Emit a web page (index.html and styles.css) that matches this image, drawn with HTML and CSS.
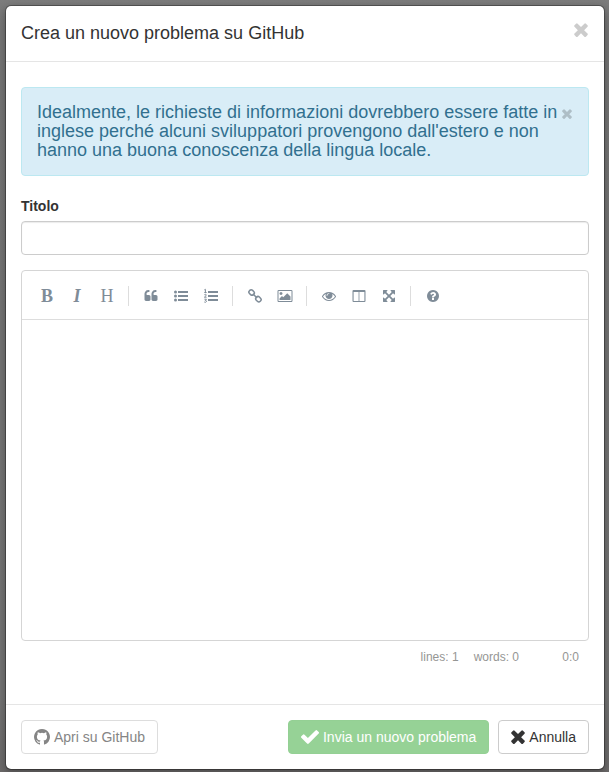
FILE: index.html
```
<!DOCTYPE html>
<html lang="it">
<head>
<meta charset="utf-8">
<meta name="viewport" content="width=device-width, initial-scale=1">
<title>Crea un nuovo problema su GitHub</title>
<link rel="stylesheet" href="styles.css">
</head>
<body>
<svg class="sprite" aria-hidden="true">
  <symbol id="times" viewBox="302 334 1188 1220"><path d="M1490 1322q0 40-28 68l-136 136q-28 28-68 28t-68-28l-294-294-294 294q-28 28-68 28t-68-28l-136-136q-28-28-28-68t28-68l294-294-294-294q-28-28-28-68t28-68l136-136q28-28 68-28t68 28l294 294 294-294q28-28 68-28t68 28l136 136q28 28 28 68t-28 68l-294 294 294 294q28 28 28 68z"/></symbol>
</svg>
<div class="modal" role="dialog" aria-labelledby="modal-title">
  <header class="modal-header">
    <h1 class="modal-title" id="modal-title">Crea un nuovo problema su GitHub</h1>
    <button class="close" type="button" aria-label="Chiudi"><svg class="close-icon"><use href="#times"/></svg></button>
  </header>
  <form class="modal-form">
    <div class="modal-body">
      <div class="alert" role="alert">
        <p class="alert-text">Idealmente, le richieste di informazioni dovrebbero essere fatte in inglese perché alcuni sviluppatori provengono dall'estero e non hanno una buona conoscenza della lingua locale.</p>
        <button class="close alert-close" type="button" aria-label="Chiudi avviso"><svg class="alert-close-icon"><use href="#times"/></svg></button>
      </div>
      <label class="label" for="title">Titolo</label>
      <input class="input" id="title" type="text">
      <div class="editor">
        <div class="toolbar" role="toolbar" aria-label="Formattazione">
          <button class="tool letter bold" type="button">B</button>
          <button class="tool letter italic" type="button">I</button>
          <button class="tool letter" type="button">H</button>
          <i class="separator"></i>
          <button class="tool" type="button" aria-label="Citazione"><svg class="icon" viewBox="0 0 1792 1792"><path d="M832 960v384q0 80-56 136t-136 56h-384q-80 0-136-56t-56-136v-704q0-104 40.5-198.5t109.5-163.5 163.5-109.5 198.5-40.5h64q26 0 45 19t19 45v128q0 26-19 45t-45 19h-64q-106 0-181 75t-75 181v32q0 40 28 68t68 28h224q80 0 136 56t56 136zm896 0v384q0 80-56 136t-136 56h-384q-80 0-136-56t-56-136v-704q0-104 40.5-198.5t109.5-163.5 163.5-109.5 198.5-40.5h64q26 0 45 19t19 45v128q0 26-19 45t-45 19h-64q-106 0-181 75t-75 181v32q0 40 28 68t68 28h224q80 0 136 56t56 136z"/></svg></button>
          <button class="tool" type="button" aria-label="Elenco puntato"><svg class="icon" viewBox="0 0 14 14"><circle cx="1.5" cy="3" r="1.5"/><circle cx="1.5" cy="7" r="1.5"/><circle cx="1.5" cy="11" r="1.5"/><path d="M4 2h10v2H4zM4 6h10v2H4zM4 10h10v2H4z"/></svg></button>
          <button class="tool" type="button" aria-label="Elenco numerato"><svg class="icon" viewBox="0 0 14 14"><path d="M4 2h10v2H4zM4 6h10v2H4zM4 10h10v2H4z"/><path class="thin" d="M.4.8l1-.5v3M.3 3.5h2.3M.4 5.7q1-.8 1.8 0 .4.8-1.8 2.500h2.200M.4 10.200h2l-1.100 1.300q1.300 0 1.200 1-.6 1.300-2.200.5"/></svg></button>
          <i class="separator"></i>
          <button class="tool" type="button" aria-label="Collegamento"><svg class="icon" viewBox="0 0 14 14"><g class="stroke"><rect x="-2.8" y="-2.2" width="5.6" height="4.4" rx="2" transform="translate(3.6 3.500) rotate(45)"/><rect x="-2.8" y="-2.2" width="5.6" height="4.4" rx="2" transform="translate(10.4 10.200) rotate(45)"/><path d="M4.800 4.800l4.400 4.200"/></g></svg></button>
          <button class="tool" type="button" aria-label="Immagine"><svg class="icon wide" viewBox="-64 0 1920 1792"><path d="M576 576q0 80-56 136t-136 56-136-56-56-136 56-136 136-56 136 56 56 136zm1024 384v448h-1408v-192l320-320 160 160 512-512zm96-704h-1600q-13 0-22.500 9.500t-9.500 22.500v1216q0 13 9.500 22.500t22.500 9.500h1600q13 0 22.500-9.500t9.500-22.500v-1216q0-13-9.500-22.500t-22.500-9.500zm160 32v1216q0 66-47 113t-113 47h-1600q-66 0-113-47t-47-113v-1216q0-66 47-113t113-47h1600q66 0 113 47t47 113z"/></svg></button>
          <i class="separator"></i>
          <button class="tool" type="button" aria-label="Anteprima"><svg class="icon" viewBox="0 0 1792 1792"><path d="M1664 960q-152-236-381-353 61 104 61 225 0 185-131.500 316.500t-316.500 131.500-316.500-131.500-131.500-316.500q0-121 61-225-229 117-381 353 133 205 333.500 326.500t434.500 121.500 434.500-121.500 333.500-326.500zm-720-384q0-20-14-34t-34-14q-125 0-214.500 89.500t-89.500 214.500q0 20 14 34t34 14 34-14 14-34q0-86 61-147t147-61q20 0 34-14t14-34zm848 384q0 34-20 69-140 230-376.500 368.500t-499.500 138.500-499.500-139-376.500-368q-20-35-20-69t20-69q140-229 376.500-368t499.500-139 499.500 139 376.500 368q20 35 20 69z"/></svg></button>
          <button class="tool" type="button" aria-label="Affianca"><svg class="icon" viewBox="0 0 14 14"><path fill-rule="evenodd" d="M1.500 1h11q1 0 1 1v10q0 1-1 1h-11q-1 0-1-1V2q0-1 1-1zM1.600 3v9h5V3zM7.400 3v9h5V3z"/></svg></button>
          <button class="tool" type="button" aria-label="Schermo intero"><svg class="icon" viewBox="0 0 1792 1792"><path d="M1411 541l-355 355 355 355 144-144q29-31 70-14 39 17 39 59v448q0 26-19 45t-45 19h-448q-42 0-59-40-17-39 14-69l144-144-355-355-355 355 144 144q31 30 14 69-17 40-59 40h-448q-26 0-45-19t-19-45v-448q0-42 40-59 39-17 69 14l144 144 355-355-355-355-144 144q-19 19-45 19-12 0-24-5-40-17-40-59v-448q0-26 19-45t45-19h448q42 0 59 40 17 39-14 69l-144 144 355 355 355-355-144-144q-31-30-14-69 17-40 59-40h448q26 0 45 19t19 45v448q0 42-39 59-13 5-25 5-26 0-45-19z"/></svg></button>
          <i class="separator"></i>
          <button class="tool" type="button" aria-label="Guida"><svg class="icon" viewBox="0 0 1792 1792"><path d="M1024 1376v-192q0-14-9-23t-23-9h-192q-14 0-23 9t-9 23v192q0 14 9 23t23 9h192q14 0 23-9t9-23zm256-672q0-88-55.500-163t-138.500-116-170-41q-243 0-371 213-15 24 8 42l132 100q7 6 19 6 16 0 25-12 53-68 86-92 34-24 86-24 48 0 85.500 26t37.500 59q0 38-20 61t-68 45q-63 28-115.500 86.500t-52.500 125.500v36q0 14 9 23t23 9h192q14 0 23-9t9-23q0-19 21.500-49.500t54.500-49.500q32-18 49-28.500t46-35 44.500-48 28-60.500 12.500-81zm384 192q0 209-103 385.500t-279.500 279.500-385.500 103-385.500-103-279.500-279.500-103-385.500 103-385.500 279.500-279.500 385.500-103 385.500 103 279.500 279.500 103 385.500z"/></svg></button>
        </div>
        <textarea class="editor-text" aria-label="Descrizione"></textarea>
      </div>
      <div class="status"><span>lines: 1</span><span>words: 0</span><span class="cursor">0:0</span></div>
    </div>
    <footer class="modal-footer">
      <button class="btn btn-open" type="button" disabled><svg class="btn-icon" viewBox="128 128 1536 1536"><path d="M896 128q209 0 385.500 103t279.500 279.500 103 385.500q0 251-146.500 451.500t-378.500 277.500q-27 5-40-7t-13-30q0-3 .5-76.500t.5-134.500q0-97-52-142 57-6 102.500-18t94-39 81-66.500 53-105 20.500-150.500q0-119-79-206 37-91-8-204-28-9-81 11t-92 44l-38 24q-93-26-192-26t-192 26q-16-11-42.500-27t-83.500-38.500-85-13.500q-45 113-8 204-79 87-79 206 0 85 20.500 150t52.500 105 80.500 67 94 39 102.500 18q-39 36-49 103-21 10-45 15t-57 5-65.500-21.500-55.500-62.500q-19-32-48.500-52t-49.500-24l-20-3q-21 0-29 4.500t-5 11.500 9 14 13 12l7 5q22 10 43.500 38t31.500 51l10 23q13 38 44 61.500t67 30 69.500 7 55.500-3.500l23-4q0 38 .5 88.500t.5 54.500q0 18-13 30t-40 7q-232-77-378.500-277.500t-146.500-451.500q0-209 103-385.500t279.500-279.500 385.500-103z"/></svg>Apri su GitHub</button>
      <button class="btn btn-submit" type="submit" disabled><svg class="btn-icon check" viewBox="121 334 1550 1188"><path d="M1671 566q0 40-28 68l-724 724-136 136q-28 28-68 28t-68-28l-136-136-362-362q-28-28-28-68t28-68l136-136q28-28 68-28t68 28l294 295 656-657q28-28 68-28t68 28l136 136q28 28 28 68z"/></svg>Invia un nuovo problema</button>
      <button class="btn" type="button"><svg class="btn-icon cancel"><use href="#times"/></svg>Annulla</button>
    </footer>
  </form>
</div>
</body>
</html>
```
FILE: styles.css
```
* { box-sizing: border-box; }

body {
  margin: 0;
  padding: 5px 4px 2px 5px;
  min-height: 100vh;
  display: flex;
  background: linear-gradient(#7c7c7c, #767676 30px, #747474 90%, #6c6a6a);
  color: #333;
  font: 14px/20px "Liberation Sans", Arial, sans-serif;
}

button, input, textarea { font: inherit; color: inherit; }
svg { display: block; fill: currentColor; }
.sprite { position: absolute; width: 0; height: 0; }

.modal {
  flex: 1;
  display: flex;
  flex-direction: column;
  background: #fff;
  background-clip: padding-box;
  border: 1px solid rgba(0, 0, 0, .3);
  border-radius: 6px;
  box-shadow: 0 3px 9px rgba(0, 0, 0, .3);
}

.modal-header {
  display: flex;
  justify-content: space-between;
  padding: 15px;
  border-bottom: 1px solid #e5e5e5;
}

.modal-title { margin: 0; font-size: 18px; line-height: 25px; font-weight: 400; }

.close { display: flex; align-self: flex-start; padding: 2px 1px; border: 0; background: none; color: #ccc; }
.close-icon { width: 14px; height: 14px; }

.modal-form { flex: 1; display: flex; flex-direction: column; }
.modal-body { flex: 1; display: flex; flex-direction: column; padding: 25px 15px; }

.alert {
  display: flex;
  margin-bottom: 20px;
  padding: 15px;
  border: 1px solid #bce8f1;
  border-radius: 4px;
  background: #d9edf7;
  color: #31708f;
}

.alert-text { flex: 1; margin: 0; font-size: 18px; line-height: 19px; }
.alert-close { padding: 6px 1px 6px 0; color: #aebec6; }
.alert-close-icon { width: 10px; height: 10px; }

.label { margin-bottom: 5px; font-weight: 700; }

.input {
  width: 100%;
  height: 34px;
  margin-bottom: 15px;
  padding: 6px 12px;
  border: 1px solid #ccc;
  border-radius: 4px;
  box-shadow: inset 0 1px 1px rgba(0, 0, 0, .08);
}

.editor { flex: 1; display: flex; flex-direction: column; border: 1px solid #d5d5d5; border-radius: 4px; }

.toolbar {
  display: flex;
  align-items: center;
  padding: 10px 10px 8px;
  border-bottom: 1px solid #ddd;
  color: #7f8c98;
}

.tool {
  display: flex;
  align-items: center;
  justify-content: center;
  width: 30px;
  height: 30px;
  padding: 0;
  border: 0;
  background: none;
}

.letter { font-family: "Liberation Serif", "Times New Roman", serif; font-size: 18px; }
.bold { font-weight: 700; }
.italic { font-style: italic; font-weight: 700; }

.separator { width: 1px; height: 20px; margin: 0 7px 0 6px; background: #ddd; }
.icon { width: 14px; height: 14px; overflow: visible; }
.wide { width: 16px; }
.thin { fill: none; stroke: currentColor; stroke-width: 1; }
.stroke { fill: none; stroke: currentColor; stroke-width: 1.5; }

.editor-text { flex: 1; min-height: 200px; padding: 10px; border: 0; border-radius: 4px; background: none; resize: none; }

.status {
  display: flex;
  justify-content: flex-end;
  gap: 15px;
  padding: 6px 10px 12px;
  color: #959694;
  font-size: 12px;
}

.cursor { min-width: 45px; text-align: right; }

.modal-footer {
  display: flex;
  gap: 9px;
  padding: 15px;
  border-top: 1px solid #e5e5e5;
}

.btn {
  display: flex;
  align-items: center;
  gap: 4px;
  padding: 6px 12px;
  border: 1px solid #ccc;
  border-radius: 4px;
  background: #fff;
  color: #333;
}

.btn-open { margin-right: auto; border-color: #ddd; color: #858585; }
.btn-submit { border-color: #94d094; background: #96d296; color: #fff; }
.btn-icon { width: 16px; height: 16px; }
.check { width: 18px; height: 14px; }
.cancel { width: 14px; height: 14px; }
```
